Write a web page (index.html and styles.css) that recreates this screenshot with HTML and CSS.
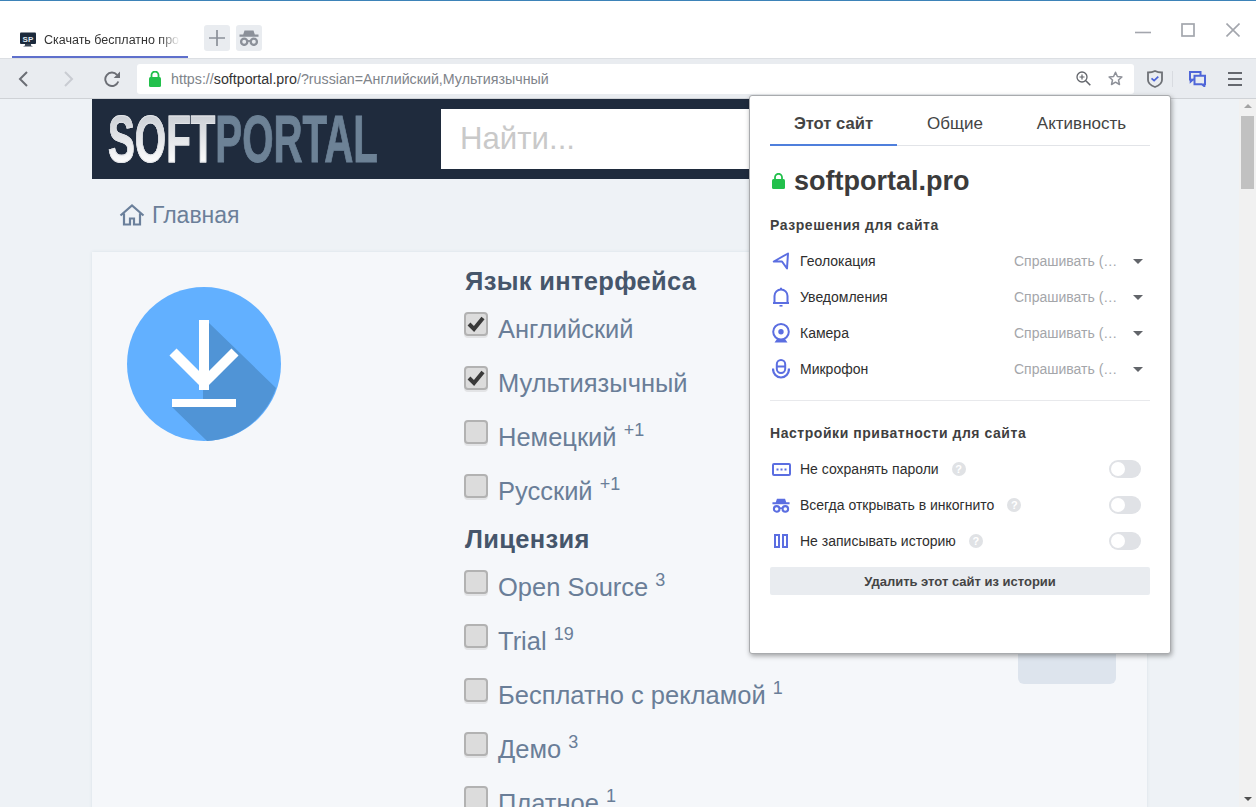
FILE: index.html
```html
<!DOCTYPE html>
<html lang="ru">
<head>
<meta charset="utf-8">
<title>Скачать бесплатно программы</title>
<link rel="stylesheet" href="styles.css">
</head>
<body>
<svg class="defs" width="0" height="0" aria-hidden="true">
  <symbol id="spy" viewBox="0 0 20 16">
    <path d="M5.500 .5h9l1.300 4H19.500v2.200H.5V4.500h3.700z" fill="currentColor"/>
    <circle cx="5.200" cy="11.800" r="3.100" fill="none" stroke="currentColor" stroke-width="2.300"/>
    <circle cx="14.800" cy="11.800" r="3.100" fill="none" stroke="currentColor" stroke-width="2.300"/>
    <path d="M8.500 11h3" stroke="currentColor" stroke-width="1.800"/>
  </symbol>
</svg>
<div class="browser">
  <header class="titlebar">
    <div class="tab">
      <svg class="favicon" width="16" height="16" viewBox="0 0 16 16"><rect y="0.5" width="16" height="11.500" rx="1" fill="#1c2a3c"/><path d="M5 12h6v1.500l2 1H3l2-1z" fill="#3a4656"/><text x="2.600" y="9.600" class="favtext">SP</text></svg>
      <span class="tab-title">Скачать бесплатно про</span>
    </div>
    <button class="tbtn"><svg width="18" height="18" viewBox="0 0 18 18"><path d="M9 1v16M1 9h16" stroke="#8b9099" stroke-width="1.700"/></svg></button>
    <button class="tbtn spy-btn"><svg width="20" height="16"><use href="#spy"/></svg></button>
    <div class="winctl">
      <svg width="16" height="14" viewBox="0 0 16 14"><path d="M0 9.500h16" stroke="#a3a6ad" stroke-width="1.600"/></svg>
      <svg width="14" height="14" viewBox="0 0 14 14"><rect x="1" y="1" width="12" height="12" fill="none" stroke="#a3a6ad" stroke-width="1.700"/></svg>
      <svg width="14" height="14" viewBox="0 0 14 14"><path d="M.5.5l13 13M13.500.5l-13 13" stroke="#a3a6ad" stroke-width="1.600"/></svg>
    </div>
  </header>

  <nav class="toolbar">
    <div class="navs">
      <svg width="10" height="16" viewBox="0 0 10 16"><path d="M9 1L2 8l7 7" fill="none" stroke="#6b6e75" stroke-width="2"/></svg>
      <svg width="10" height="16" viewBox="0 0 10 16"><path d="M1 1l7 7-7 7" fill="none" stroke="#c9ccd2" stroke-width="2"/></svg>
      <svg class="reload" width="17" height="16" viewBox="0 0 17 16"><path d="M14.300 10.500A6.700 6.700 0 1 1 13 3.800" fill="none" stroke="#6b6e75" stroke-width="1.900"/><path d="M16 .6v6.300H9.700z" fill="#6b6e75"/></svg>
    </div>
    <div class="address">
      <svg width="12" height="16" viewBox="0 0 12 16"><rect y="6" width="12" height="10" rx="1.500" fill="#22c04c"/><path d="M2.500 7V4a3.500 3.500 0 0 1 7 0v3" fill="none" stroke="#22c04c" stroke-width="1.800"/></svg>
      <span class="url"><span class="dim">https://</span>softportal.pro<span class="dim">/?russian=Английский,Мультиязычный</span></span>
      <svg class="zoomico" width="15" height="15" viewBox="0 0 15 15"><circle cx="6" cy="6" r="5" fill="none" stroke="#62656b" stroke-width="1.300"/><path d="M9.800 9.800l4.500 4.500" stroke="#62656b" stroke-width="1.600"/><path d="M3.500 6h5M6 3.500v5" stroke="#62656b" stroke-width="1.200"/></svg>
      <svg class="starico" width="15" height="15" viewBox="0 0 15 15"><path d="M7.500 1.300l1.900 4.200 4.500.5-3.400 3 1 4.500-4-2.300-4 2.300 1-4.500-3.400-3 4.500-.5z" fill="none" stroke="#8d9098" stroke-width="1.500" stroke-linejoin="round"/></svg>
    </div>
    <div class="extras">
      <svg width="16" height="18" viewBox="0 0 16 18"><path d="M1 2.500C4 2.500 6 2 8 1c2 1 4 1.500 7 1.500v7.500c0 3.500-3.500 5.700-7 7-3.500-1.300-7-3.500-7-7z" fill="none" stroke="#6e7176" stroke-width="1.800"/><path d="M4.500 8.300l2.600 2.300 4.200-4" fill="none" stroke="#4a62d8" stroke-width="1.700"/></svg>
      <span class="sep"></span>
      <svg class="chatico" width="17" height="16" viewBox="0 0 17 16"><path d="M11.500 4.500V1H1v7.500h.7v2l2.300-2h1.500" fill="none" stroke="#4f66d8" stroke-width="2"/><path d="M5.500 4.700H16v8.500h-.7v2l-2.400-2H5.500z" fill="none" stroke="#4f66d8" stroke-width="2"/></svg>
      <svg class="menuico" width="14" height="16" viewBox="0 0 14 16"><path d="M0 2h14M0 8h14M0 14h14" stroke="#65686e" stroke-width="1.800"/></svg>
    </div>
  </nav>

  <div class="viewport">
    <main class="page">
      <div class="site-head">
        <div class="logo"><span class="logo-text"><span class="soft">SOFT</span><span class="portal">PORTAL</span></span></div>
        <div class="search">Найти...</div>
      </div>
      <div class="crumbs">
        <svg width="26" height="22" viewBox="0 0 26 22"><path d="M1.500 11.500L13 1.500l11.500 10M5 9.500V20.500h6v-6h4v6h6V9.500" fill="none" stroke="#6b809b" stroke-width="2.200"/></svg>
        <span>Главная</span>
      </div>
      <section class="card">
        <div class="app-icon">
          <svg width="154" height="154" viewBox="0 0 154 154">
            <circle cx="77" cy="77" r="77" fill="#62b0ff"/>
            <path d="M82 36L149 101A77 77 0 0 1 80 154L45 120H76V60z" fill="#5094d6"/>
            <path d="M77 33v70M46 65l31 31 31-31" fill="none" stroke="#fff" stroke-width="10"/>
            <path d="M45 116h64" stroke="#fff" stroke-width="8"/>
          </svg>
        </div>
        <div class="filters">
          <h2>Язык интерфейса</h2>
          <div class="opt"><span class="cb on"><svg width="18" height="16" viewBox="0 0 18 16"><path d="M2 8l5 5 9-11" fill="none" stroke="#3a3a3a" stroke-width="4"/></svg></span><span>Английский</span></div>
          <div class="opt"><span class="cb on"><svg width="18" height="16" viewBox="0 0 18 16"><path d="M2 8l5 5 9-11" fill="none" stroke="#3a3a3a" stroke-width="4"/></svg></span><span>Мультиязычный</span></div>
          <div class="opt"><span class="cb"></span><span>Немецкий <sup>+1</sup></span></div>
          <div class="opt last"><span class="cb"></span><span>Русский <sup>+1</sup></span></div>
          <h2>Лицензия</h2>
          <div class="opt"><span class="cb"></span><span>Open Source <sup>3</sup></span></div>
          <div class="opt"><span class="cb"></span><span>Trial <sup>19</sup></span></div>
          <div class="opt"><span class="cb"></span><span>Бесплатно с рекламой <sup>1</sup></span></div>
          <div class="opt"><span class="cb"></span><span>Демо <sup>3</sup></span></div>
          <div class="opt"><span class="cb"></span><span>Платное <sup>1</sup></span></div>
        </div>
        <div class="side"><div class="side-btn"></div></div>
      </section>
    </main>
    <aside class="scrollbar">
      <span class="arrow up"></span>
      <span class="thumb"></span>
      <span class="arrow down"></span>
    </aside>
  </div>

  <div class="popup">
    <div class="tabs">
      <div class="ptab active">Этот сайт</div>
      <div class="ptab">Общие</div>
      <div class="ptab">Активность</div>
    </div>
    <div class="domain">
      <svg width="13" height="16" viewBox="0 0 13 16"><rect y="6" width="13" height="10" rx="1.500" fill="#22c04c"/><path d="M3 7V4.300a3.500 3.500 0 0 1 7 0V7" fill="none" stroke="#22c04c" stroke-width="1.800"/></svg>
      <span>softportal.pro</span>
    </div>
    <h3>Разрешения для сайта</h3>
    <div class="prow">
      <svg class="pico" width="18" height="18" viewBox="0 0 18 18"><path d="M16 1.500L1.800 9.500H10l5 7z" fill="none" stroke="#5b6ee1" stroke-width="2" stroke-linejoin="round"/></svg>
      <span class="plabel">Геолокация</span>
      <span class="pval">Спрашивать (…</span><span class="caret"></span>
    </div>
    <div class="prow">
      <svg class="pico" width="18" height="20" viewBox="0 0 18 20"><path d="M2.500 16V9a6.500 6.500 0 0 1 13 0v7" fill="none" stroke="#5b6ee1" stroke-width="2"/><path d="M1 16h16" stroke="#5b6ee1" stroke-width="2"/><path d="M7.500 18.800h3" stroke="#5b6ee1" stroke-width="1.600"/><path d="M8 1.800h2" stroke="#5b6ee1" stroke-width="2"/></svg>
      <span class="plabel">Уведомления</span>
      <span class="pval">Спрашивать (…</span><span class="caret"></span>
    </div>
    <div class="prow">
      <svg class="pico" width="18" height="20" viewBox="0 0 18 20"><circle cx="9" cy="8.800" r="7.800" fill="none" stroke="#5b6ee1" stroke-width="2"/><circle cx="9" cy="8.800" r="2.700" fill="#5b6ee1"/><path d="M2.500 19.500h13l-2.500-3.500H5z" fill="#5b6ee1"/></svg>
      <span class="plabel">Камера</span>
      <span class="pval">Спрашивать (…</span><span class="caret"></span>
    </div>
    <div class="prow">
      <svg class="pico" width="18" height="20" viewBox="0 0 18 20"><rect x="4.800" y="1" width="8.400" height="13" rx="4.200" fill="none" stroke="#5b6ee1" stroke-width="2"/><path d="M5 7.500h8" stroke="#5b6ee1" stroke-width="2"/><path d="M1 9.500c0 5.500 3.500 9 8 9s8-3.500 8-9" fill="none" stroke="#5b6ee1" stroke-width="2.200"/></svg>
      <span class="plabel">Микрофон</span>
      <span class="pval">Спрашивать (…</span><span class="caret"></span>
    </div>
    <hr>
    <h3>Настройки приватности для сайта</h3>
    <div class="prow">
      <svg class="pico" width="19" height="13" viewBox="0 0 19 13"><rect x="1" y="1" width="17" height="11" rx="1" fill="none" stroke="#5b6ee1" stroke-width="2"/><path d="M4.500 6.500h2M8.500 6.500h2M12.500 6.500h2" stroke="#5b6ee1" stroke-width="2"/></svg>
      <span class="plabel">Не сохранять пароли</span>
      <span class="help">?</span><span class="toggle"></span>
    </div>
    <div class="prow">
      <svg class="pico spy-blue" width="18" height="15"><use href="#spy"/></svg>
      <span class="plabel">Всегда открывать в инкогнито</span>
      <span class="help">?</span><span class="toggle"></span>
    </div>
    <div class="prow">
      <svg class="pico" width="18" height="14" viewBox="0 0 18 14"><rect x="3" y="1" width="4" height="12" fill="none" stroke="#5b6ee1" stroke-width="2"/><rect x="11" y="1" width="4" height="12" fill="none" stroke="#5b6ee1" stroke-width="2"/></svg>
      <span class="plabel">Не записывать историю</span>
      <span class="help">?</span><span class="toggle"></span>
    </div>
    <button class="wipe">Удалить этот сайт из истории</button>
  </div>
</div>
</body>
</html>
```
FILE: styles.css
```css
* { box-sizing: border-box; }
html, body { margin: 0; height: 100%; overflow: hidden; }
body { font-family: "Liberation Sans", Arial, sans-serif; background: #fff; }
.defs { display: block; height: 0; }
.browser { position: relative; width: 1256px; height: 807px; display: flex; flex-direction: column; overflow: hidden; }

.titlebar { flex: none; height: 58px; border-top: 1px solid #3d83b8; display: flex; align-items: flex-start; padding-left: 12px; background: #fff; }
.tab { width: 176px; height: 34px; margin-top: 23px; border-bottom: 2px solid #5f70cc; display: flex; align-items: center; padding: 0 8px; gap: 8px; margin-right: 16px; }
.favicon { flex: none; }
.favtext { font: bold 8px "Liberation Sans", sans-serif; fill: #dfe6ee; }
.tab-title { font-size: 12.500px; color: #333; white-space: nowrap; width: 136px; -webkit-mask-image: linear-gradient(to right, #000 85%, transparent 100%); mask-image: linear-gradient(to right, #000 85%, transparent 100%); }
.tbtn { width: 26px; height: 26px; margin: 24px 6px 0 0; padding: 0; border: 0; border-radius: 3px; background: #e9ecf0; display: flex; align-items: center; justify-content: center; }
.spy-btn { color: #8b9099; }
.winctl { margin-left: auto; display: flex; align-items: center; gap: 30px; padding: 22px 16px 0 0; }
.winctl svg:nth-child(2) { margin-right: 1px; }

.toolbar { flex: none; height: 41px; display: flex; align-items: center; background: #e9ecf0; border-top: 1px solid #dcdfe3; border-bottom: 1px solid #cfd2d6; }
.navs { width: 137px; padding-left: 18px; display: flex; align-items: center; gap: 36px; }
.reload { margin-left: -6px; }
.address { width: 997px; height: 30px; background: #fff; border-radius: 3px; display: flex; align-items: center; padding: 0 11px 0 12px; }
.url { margin-left: 10px; flex: 1; font-size: 14.250px; line-height: 30px; padding-top: 1px; color: #333; white-space: nowrap; }
.dim { color: #80848a; }
.zoomico { margin-right: 17px; }
.extras { flex: 1; display: flex; align-items: center; padding-left: 13px; }
.sep { width: 1px; height: 16px; background: #d8dbe0; margin: 0 16px 0 9px; }
.menuico { margin-left: 22px; }

.viewport { flex: 1; min-height: 0; display: flex; }
.page { flex: 1; min-width: 0; background: #eef2f6; padding: 0 92px; overflow: hidden; }
.site-head { height: 80px; background: #1f2b3d; display: flex; align-items: center; }
.logo { flex: none; width: 349px; padding-left: 16px; height: 66px; }
.logo-text { display: inline-block; font: bold 66px/1 "Liberation Sans", sans-serif; white-space: nowrap; transform: scaleX(.61); transform-origin: left center; }
.soft { color: transparent; background: linear-gradient(#c9cdd3 15%, #fff 85%); -webkit-background-clip: text; background-clip: text; -webkit-text-stroke: 1px #e2e4e8; }
.portal { color: #6d8296; -webkit-text-stroke: 1px #6d8296; }
.search { flex: 1; height: 60px; margin-right: 10px; background: #fff; padding-left: 19px; font-size: 31.200px; line-height: 60px; color: #c9c9c9; }
.crumbs { height: 73px; padding: 0 0 1px 28px; display: flex; align-items: center; gap: 7px; font-size: 23px; color: #6b7f99; margin-left: -1px; }
.card { background: #f5f7fa; display: flex; height: 560px; box-shadow: 0 0 3px #d8e0e6; }
.app-icon { width: 373px; padding: 35px 0 0 35px; }
.filters { width: 553px; padding-top: 13px; }
h2 { margin: 0 0 16px; font-size: 25.500px; line-height: 32px; font-weight: bold; color: #46566b; letter-spacing: .32px; }
.opt { height: 48px; margin-bottom: 6px; display: flex; gap: 10px; font-size: 25.500px; line-height: 32px; color: #6a7e98; white-space: nowrap; }
.opt.last { margin-bottom: 0; }
sup { font-size: 18px; line-height: 0; vertical-align: 10px; }
.cb { flex: none; width: 24px; height: 24px; margin: -1px 0 0 -1px; border: 2px solid #b2b2b2; border-radius: 4px; background: #dcdcdc; box-shadow: 0 2px 0 #e3e4e6; display: flex; align-items: center; justify-content: center; }
.side { flex: 1; padding: 330px 31px 0 0; display: flex; justify-content: flex-end; align-items: flex-start; }
.side-btn { width: 98px; height: 102px; border-radius: 6px; background: #dde4ed; }

.scrollbar { flex: none; width: 17px; background: #f1f1f1; position: relative; display: flex; flex-direction: column; align-items: center; padding-top: 5px; }
.arrow { width: 0; height: 0; border-left: 4px solid transparent; border-right: 4px solid transparent; }
.arrow.up { border-bottom: 4px solid #a3a3a3; }
.arrow.down { border-top: 4px solid #505050; margin-top: auto; margin-bottom: 6px; }
.thumb { width: 13px; height: 73px; margin-top: 8px; background: #c1c1c1; }

.popup { position: absolute; left: 749px; top: 95px; width: 422px; height: 559px; background: #fff; border: 1px solid #a9abae; border-radius: 3px; box-shadow: 1px 2px 5px rgba(0,0,0,.35); padding: 0 20px; color: #333; }
.tabs { display: grid; grid-template-columns: 127px 116px 137px; height: 50px; border-bottom: 1px solid #e2e4e8; }
.ptab { font-size: 17px; line-height: 56px; height: 50px; text-align: center; color: #444; }
.ptab.active { font-size: 16.600px; font-weight: bold; border-bottom: 2px solid #4f7fdc; }
.domain { display: flex; align-items: center; gap: 9px; height: 36px; margin: 17px 0 0 2px; font-size: 27px; font-weight: bold; color: #3b3b3b; }
h3 { margin: 0; font-size: 14px; line-height: 20px; font-weight: bold; color: #3f3f3f; letter-spacing: .55px; }
.domain + h3 { margin-top: 16px; margin-bottom: 8px; }
.prow { height: 36px; display: flex; align-items: center; font-size: 14px; }
.pico { flex: none; margin: 0 10px 0 2px; }
.pico[width="19"] { margin-right: 9px; }
.spy-blue { color: #5b6ee1; }
.plabel { color: #2e2e2e; }
.pval { margin-left: auto; width: 102px; color: #a4a6aa; white-space: nowrap; }
.caret { width: 0; height: 0; margin: 0 7px 0 17px; border-left: 5px solid transparent; border-right: 5px solid transparent; border-top: 5px solid #62656a; }
hr { margin: 13px 0 22px; border: 0; border-top: 1px solid #e8e9ec; }
hr + h3 { margin-bottom: 8px; }
.help { width: 14px; height: 14px; margin-left: 13px; border-radius: 50%; background: #e0e2e5; color: #fff; font-size: 11px; font-weight: bold; line-height: 14px; text-align: center; }
.toggle { position: relative; margin: 0 9px 0 auto; width: 32px; height: 18px; border-radius: 9px; background: #e0e2e6; }
.toggle::after { content: ""; position: absolute; left: 2px; top: 2px; width: 14px; height: 14px; border-radius: 50%; background: #fff; }
.wipe { display: block; width: 100%; height: 28px; margin-top: 8px; border: 0; border-radius: 2px; background: #e9ecf0; font: bold 13px "Liberation Sans", sans-serif; color: #444; }
```
